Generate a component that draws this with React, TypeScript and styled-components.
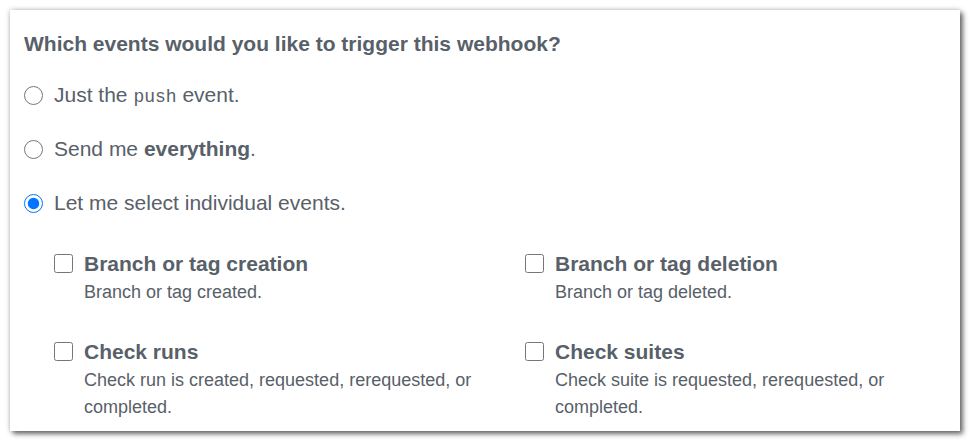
import React, { useState } from "react";
import styled, { createGlobalStyle } from "styled-components";

const GlobalStyle = createGlobalStyle`
  html, body {
    margin: 0;
    padding: 0;
    background: #ffffff;
  }
  body {
    font-family: "Liberation Sans", Arial, Helvetica, sans-serif;
    color: #586069;
  }
`;

const Page = styled.div`
  padding: 10px 15px 16px 10px;
`;

const Card = styled.div`
  width: 950px;
  height: 421px;
  box-sizing: border-box;
  background: #ffffff;
  box-shadow: 0 0 5px rgba(0, 0, 0, 0.25), 3px 3px 5px rgba(0, 0, 0, 0.55);
  padding: 18px 14px 0 14px;
  overflow: hidden;
`;

const Heading = styled.h2`
  margin: 0 0 8px 0;
  font-size: 21px;
  line-height: 32px;
  font-weight: bold;
  color: #586069;
`;

const RadioList = styled.div`
  display: flex;
  flex-direction: column;
`;

const RadioRow = styled.label`
  display: flex;
  align-items: center;
  height: 54px;
  font-size: 21px;
  cursor: pointer;
`;

const Radio = styled.input.attrs({ type: "radio" })`
  width: 19px;
  height: 19px;
  margin: 0 11px 0 0;
  flex: none;
`;

const Code = styled.code`
  font-family: "Liberation Mono", "Courier New", monospace;
  font-size: 18px;
`;

const EventGrid = styled.div`
  display: grid;
  grid-template-columns: 471px 1fr;
  row-gap: 32px;
  padding: 20px 0 0 30px;
`;

const EventItem = styled.label`
  display: flex;
  align-items: flex-start;
  cursor: pointer;
`;

const Checkbox = styled.input.attrs({ type: "checkbox" })`
  width: 19px;
  height: 19px;
  margin: 4px 11px 0 0;
  flex: none;
`;

const EventText = styled.div`
  max-width: 405px;
`;

const EventTitle = styled.div`
  font-size: 21px;
  line-height: 28px;
  font-weight: bold;
`;

const EventDesc = styled.div`
  font-size: 18px;
  line-height: 27px;
  margin-top: 1px;
`;

const events = [
  { title: "Branch or tag creation", desc: "Branch or tag created." },
  { title: "Branch or tag deletion", desc: "Branch or tag deleted." },
  { title: "Check runs", desc: "Check run is created, requested, rerequested, or completed." },
  { title: "Check suites", desc: "Check suite is requested, rerequested, or completed." },
];

export default function App() {
  const [mode, setMode] = useState("select");

  return (
    <Page>
      <GlobalStyle />
      <Card>
        <Heading>Which events would you like to trigger this webhook?</Heading>
        <RadioList>
          <RadioRow>
            <Radio name="events" checked={mode === "push"} onChange={() => setMode("push")} />
            <span>Just the <Code>push</Code> event.</span>
          </RadioRow>
          <RadioRow>
            <Radio name="events" checked={mode === "all"} onChange={() => setMode("all")} />
            <span>Send me <strong>everything</strong>.</span>
          </RadioRow>
          <RadioRow>
            <Radio name="events" checked={mode === "select"} onChange={() => setMode("select")} />
            <span>Let me select individual events.</span>
          </RadioRow>
        </RadioList>
        <EventGrid>
          {events.map((ev) => (
            <EventItem key={ev.title}>
              <Checkbox />
              <EventText>
                <EventTitle>{ev.title}</EventTitle>
                <EventDesc>{ev.desc}</EventDesc>
              </EventText>
            </EventItem>
          ))}
        </EventGrid>
      </Card>
    </Page>
  );
}
